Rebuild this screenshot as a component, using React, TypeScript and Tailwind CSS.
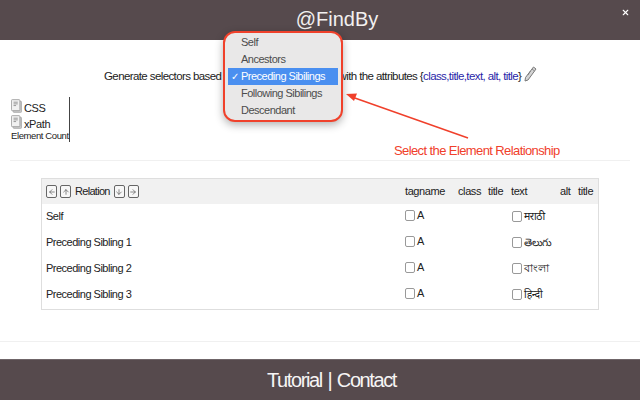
import { ArrowDown, ArrowLeft, ArrowRight, ArrowUp, X } from "lucide-react";

const rows = [
  { name: "Self", text: "मराठी" },
  { name: "Preceding Sibling 1", text: "తెలుగు" },
  { name: "Preceding Sibling 2", text: "বাংলা" },
  { name: "Preceding Sibling 3", text: "हिन्दी" },
];

const options = ["Self", "Ancestors", "Preceding Sibilings", "Following Sibilings", "Descendant"];

function Doc() {
  return (
    <svg width="11" height="14" viewBox="0 0 13 16" className="mb-[1px] mr-[2px] shrink-0">
      <rect x="2.5" y="2.5" width="10" height="13" rx="1" fill="#c9c9c9" stroke="#a8a8a8" />
      <rect x="0.5" y="0.5" width="10" height="13" rx="1" fill="#f1f1f1" stroke="#9b9b9b" />
      <path d="M3 3.5h5M3 5.5h5M3 7.5h3" stroke="#8a8a8a" strokeWidth="1" />
    </svg>
  );
}

function PencilIcon() {
  return (
    <svg width="13" height="16" viewBox="0 0 13 16" className="ml-[3px] -mt-[5px] shrink-0">
      <path d="M9.5 1 L12 3 L4 14 L1 15 L1.5 11.5 Z" fill="#d4d4d4" stroke="#7a7a7a" strokeWidth="1" />
      <path d="M8 3 L10.5 5 M6.5 5 L4 9" stroke="#7a7a7a" strokeWidth="0.8" />
    </svg>
  );
}

function KeyBtn({ children }: { children: React.ReactNode }) {
  return (
    <span className="flex h-[13px] w-[11px] items-center justify-center rounded-[2px] border border-[#666] bg-[#f7f7f7] text-[#555]">
      {children}
    </span>
  );
}

function Box() {
  return <span className="inline-block h-[11px] w-[10px] rounded-[2px] border border-[#999] bg-white" />;
}

export default function App() {
  return (
    <div className="relative flex h-[400px] w-[640px] flex-col overflow-hidden bg-white font-['Liberation_Sans',Arial,sans-serif] text-[11px] tracking-[-0.4px] text-[#222]">
      <header className="relative flex h-10 shrink-0 items-center justify-center bg-[#564a4d] pb-[2px] pl-[34px] text-[20px] tracking-normal text-[#f2f0f0]">
        @FindBy
        <X className="absolute right-[10px] top-[8px] text-white" size={9} strokeWidth={3} />
      </header>

      <div className="mt-[28px] flex h-[17px] items-center whitespace-nowrap pl-[104px] text-[11.5px] leading-none tracking-[-0.6px]">
        <span>Generate selectors based on</span>
        <span className="ml-[103px]">with the attributes {"{"}</span>
        <span className="text-[#2a1fa8]">class,title,text, alt, title</span>
        <span>{"}"}</span>
        <PencilIcon />
      </div>

      <div className="ml-[10px] mt-[12px] flex h-[45px] w-[60px] flex-col whitespace-nowrap border-r border-[#444] leading-[12px]">
        <div className="flex h-[17px] items-end pl-[1px]">
          <Doc />
          <span>CSS</span>
        </div>
        <div className="flex h-[17px] items-end pl-[1px]">
          <Doc />
          <span>xPath</span>
        </div>
        <span className="pl-[1px] text-[9.5px] tracking-[-0.4px]">Element Count</span>
      </div>

      <div className="mx-[10px] mt-[18px] h-px bg-[#f0f0f0]" />

      <div className="ml-[41px] mt-[17px] w-[558px] border border-[#dedede] pb-[1px]">
        <div className="flex h-[25px] items-center bg-[#f1f1f1] pl-[4px]">
          <div className="flex w-[359px] items-center gap-[3px]">
            <KeyBtn><ArrowLeft size={8} /></KeyBtn>
            <KeyBtn><ArrowUp size={8} /></KeyBtn>
            <span className="px-[1px] tracking-[-0.7px]">Relation</span>
            <KeyBtn><ArrowDown size={8} /></KeyBtn>
            <KeyBtn><ArrowRight size={8} /></KeyBtn>
          </div>
          <span className="w-[53px]">tagname</span>
          <span className="w-[30px]">class</span>
          <span className="w-[23px]">title</span>
          <span className="w-[49px]">text</span>
          <span className="w-[18px]">alt</span>
          <span>title</span>
        </div>
        {rows.map((r) => (
          <div key={r.name} className="flex h-[26px] items-center pb-[2px] pl-[4px] tracking-[-0.5px]">
            <span className="w-[359px]">{r.name}</span>
            <span className="flex w-[107px] items-center gap-[2px] -mt-[2px]">
              <Box />A
            </span>
            <span className="mt-[1px] flex items-center gap-[2px] font-['Noto_Sans','DejaVu_Sans',sans-serif] text-[10.5px]">
              <Box />
              {r.text}
            </span>
          </div>
        ))}
      </div>

      <div className="mt-[31px] h-px bg-[#f0f0f0]" />

      <footer className="mt-auto flex h-[41px] shrink-0 items-center justify-center border-t border-[#6f6568] bg-[#564a4d] pl-[23px] text-[20px] tracking-[-1.4px] text-[#f7f5f5] [word-spacing:1.5px]">
        Tutorial | Contact
      </footer>

      {/* dropdown callout */}
      <div className="absolute left-[223px] top-[31px] flex h-[91px] w-[120px] flex-col justify-center whitespace-nowrap rounded-[12px] border-2 border-[#f0412b] bg-[#e9e8e8] px-[3px] text-[11px] tracking-[-0.5px] text-[#4c4c4c] shadow-[0_3px_8px_rgba(0,0,0,0.3)]">
        {options.map((o) => (
          <div
            key={o}
            className={
              o === "Preceding Sibilings"
                ? "relative flex h-[17px] items-center bg-[#4a8ff0] pl-[13px] text-white"
                : "flex h-[17px] items-center pl-[13px]"
            }
          >
            {o === "Preceding Sibilings" && <span className="absolute left-[3px] text-[10px]">✓</span>}
            {o}
          </div>
        ))}
      </div>

      <svg className="absolute left-[340px] top-[85px]" width="132" height="56" viewBox="0 0 132 56">
        <path d="M128 53 L12 12" stroke="#f0402b" strokeWidth="1.5" />
        <path d="M6 9 L17 8.5 L14 16 Z" fill="#f0402b" />
      </svg>
      <span className="absolute left-[394px] top-[141px] text-[13px] tracking-[-0.6px] text-[#f0402b]">
        Select the Element Relationship
      </span>
    </div>
  );
}
